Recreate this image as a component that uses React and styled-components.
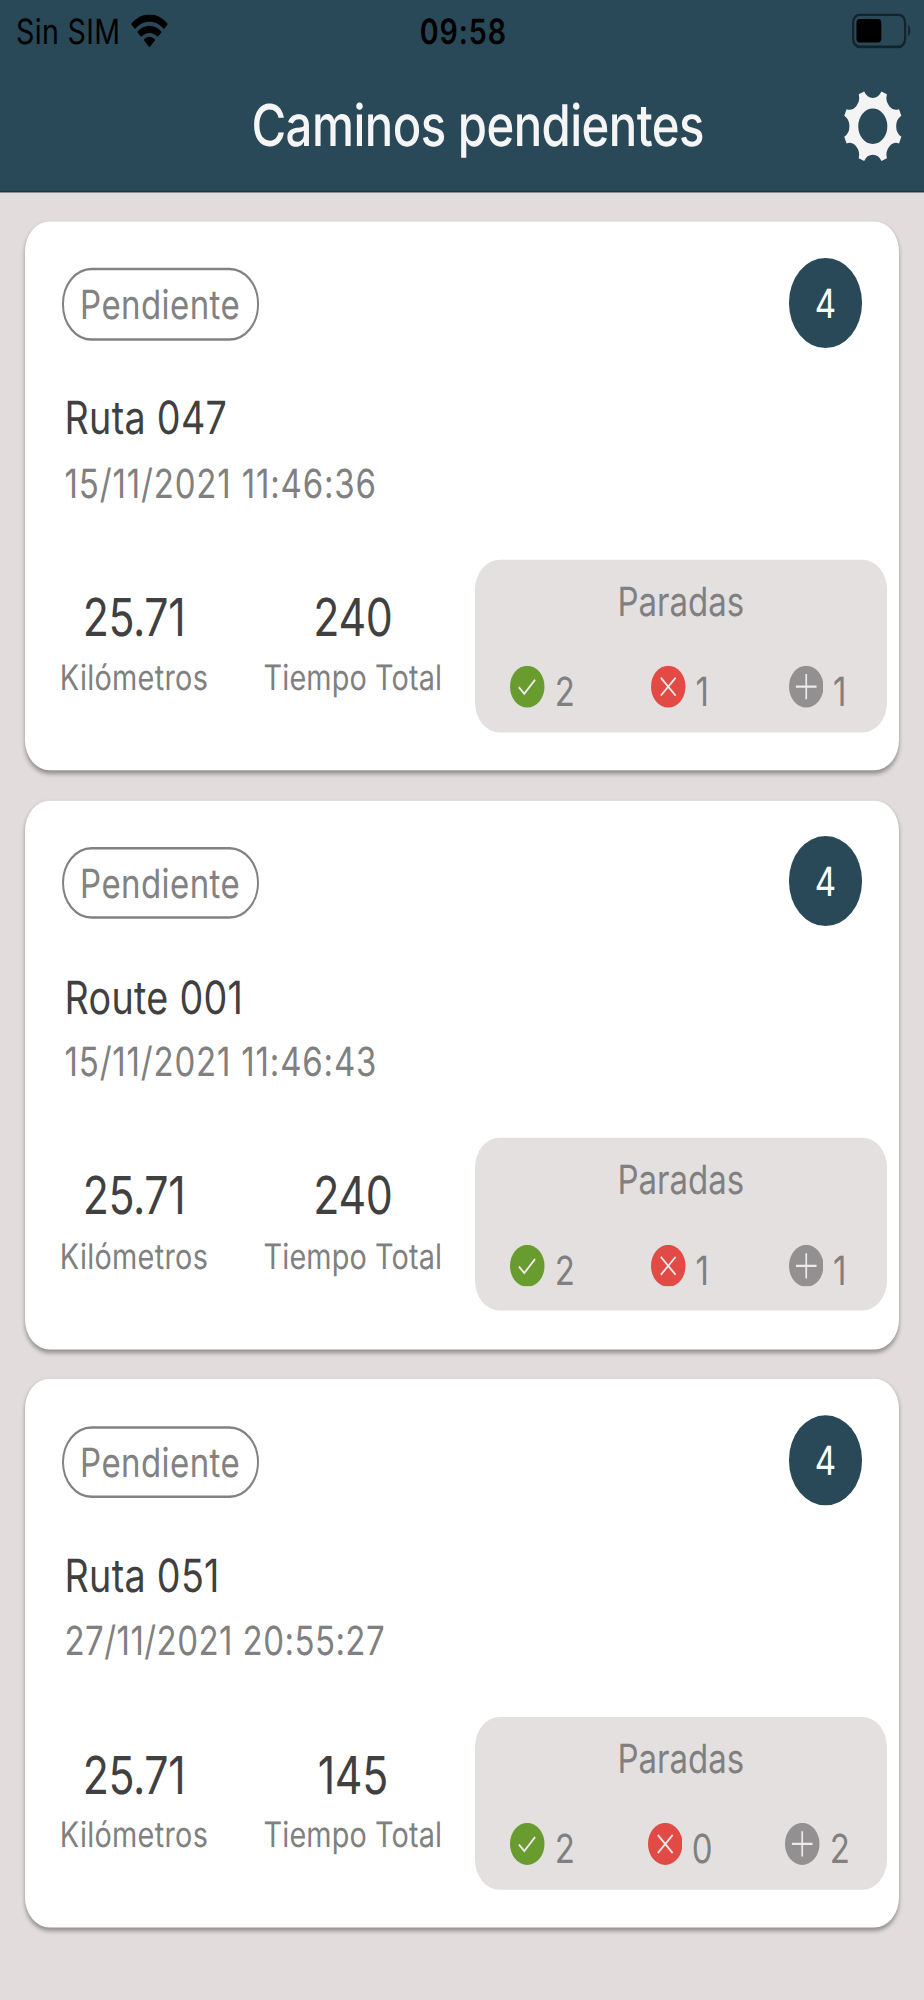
import React from "react";
import styled, { createGlobalStyle } from "styled-components";

const GlobalStyle = createGlobalStyle`
  body {
    margin: 0;
    background-color: #e2dcdc;
  }
`;

const routes = [
  { name: "Ruta 047", date: "15/11/2021 11:46:36", dateSpacing: "0.34px", km: "25.71", time: "240", total: 4, done: 2, failed: 1, added: 1 },
  { name: "Route 001", date: "15/11/2021 11:46:43", dateSpacing: "0.33px", km: "25.71", time: "240", total: 4, done: 2, failed: 1, added: 1 },
  { name: "Ruta 051", date: "27/11/2021 20:55:27", dateSpacing: "0.18px", km: "25.71", time: "145", total: 4, done: 2, failed: 0, added: 2 },
];

function WifiIcon() {
  return (
    <Wifi viewBox="0 0 15 11">
      <path d="M7.5 0C4.7 0 2.1 1.1 0.2 3L0.2 3.4L1.5 4.7H1.8C3.3 3.2 5.3 2.4 7.5 2.4S11.7 3.2 13.2 4.7H13.5L14.8 3.4V3C12.9 1.1 10.3 0 7.5 0Z" />
      <path d="M7.5 3.7C5.7 3.7 4 4.4 2.7 5.6V6L4 7.3H4.4C5.2 6.5 6.3 6.1 7.5 6.1S9.8 6.5 10.6 7.3H11L12.3 6V5.6C11 4.4 9.3 3.7 7.5 3.7Z" />
      <path d="M7.5 7.4C6.7 7.4 5.9 7.7 5.3 8.2V8.6L7.3 10.7H7.7L9.7 8.6V8.2C9.1 7.7 8.3 7.4 7.5 7.4Z" />
    </Wifi>
  );
}

// eight narrow teeth with a round notch between each pair
const gearPath = () => {
  const point = (deg) => {
    const a = (deg * Math.PI) / 180;
    return `${(12.1 * Math.cos(a)).toFixed(2)} ${(12.1 * Math.sin(a)).toFixed(2)}`;
  };
  let d = "";
  for (let i = 0; i < 8; i++) {
    const mid = 22.5 + i * 45;
    d += `${i ? "L" : "M"}${point(mid - 5.7)}L${point(mid + 5.7)}A3.97 3.97 0 0 0 ${point(mid + 39.3)}`;
  }
  return `${d}ZM5.9 0A5.9 5.9 0 1 0 -5.9 0A5.9 5.9 0 1 0 5.9 0Z`;
};

function GearIcon() {
  return (
    <Gear viewBox="-12.5 -12.5 25 25">
      <path d={gearPath()} fill="#f4f4f4" fillRule="evenodd" />
    </Gear>
  );
}

function RouteCard({ route }) {
  return (
    <Card>
      <CardTop>
        <Status>Pendiente</Status>
        <Total>{route.total}</Total>
      </CardTop>
      <Name>{route.name}</Name>
      <DateText $spacing={route.dateSpacing}>{route.date}</DateText>
      <CardBottom>
        <Metric>
          <Value>{route.km}</Value>
          <Label $spacing="0.12px">Kilómetros</Label>
        </Metric>
        <Metric>
          <Value>{route.time}</Value>
          <Label $spacing="0.05px">Tiempo Total</Label>
        </Metric>
        <Stops>
          <StopsTitle>Paradas</StopsTitle>
          <StopsRow>
            <Stop>
              <StopIcon viewBox="0 0 14 14">
                <circle cx="7" cy="7" r="7" fill="#689c2f" />
                <path d="M3.6 7.2L5.8 9.4L10.2 4.7" />
              </StopIcon>
              <Count>{route.done}</Count>
            </Stop>
            <Stop>
              <StopIcon viewBox="0 0 14 14">
                <circle cx="7" cy="7" r="7" fill="#e24b45" />
                <path d="M4 4L10 10M10 4L4 10" />
              </StopIcon>
              <Count>{route.failed}</Count>
            </Stop>
            <Stop>
              <StopIcon viewBox="0 0 14 14">
                <circle cx="7" cy="7" r="7" fill="#929091" />
                <path d="M7 2.8V11.2M2.8 7H11.2" />
              </StopIcon>
              <Count>{route.added}</Count>
            </Stop>
          </StopsRow>
        </Stops>
      </CardBottom>
    </Card>
  );
}

function App() {
  return (
    <Viewport>
      <GlobalStyle />
      <Screen>
        <Header>
          <StatusBar>
            <Carrier>
              Sin SIM
              <WifiIcon />
            </Carrier>
            <Clock>09:58</Clock>
            <Battery viewBox="0 0 24 12">
              <rect x="0.45" y="0.45" width="21.1" height="10.7" rx="2.6" fill="none" stroke="#000" strokeOpacity="0.5" strokeWidth="0.9" />
              <rect x="1.8" y="1.9" width="10.1" height="7.8" rx="1.3" />
              <path d="M22.8 3.9C23.9 4.4 23.9 7.2 22.8 7.7Z" fillOpacity="0.5" />
            </Battery>
          </StatusBar>
          <NavBar>
            <Title>Caminos pendientes</Title>
            <GearIcon />
          </NavBar>
        </Header>
        <List>
          {routes.map((route) => (
            <RouteCard key={route.name} route={route} />
          ))}
        </List>
      </Screen>
    </Viewport>
  );
}

const Viewport = styled.div`
  width: 924px;
  height: 2000px;
  overflow: hidden;
`;

/* 375x667 pt phone screen, stretched over the 924x2000 canvas */
const Screen = styled.div`
  width: 375px;
  height: 667px;
  zoom: 2.464;
  transform: scaleY(1.2169);
  transform-origin: 0 0;
  background-color: #e2dcdc;
  font-family: Inter, "Liberation Sans", sans-serif;
  text-rendering: geometricPrecision;
  white-space: nowrap;
`;

const Header = styled.div`
  height: 64px;
  box-sizing: border-box;
  background-color: #294858;
  border-bottom: 0.5px solid #1b3444;
`;

const StatusBar = styled.div`
  height: 20px;
  padding: 0 5.4px 0 6.5px;
  display: grid;
  grid-template-columns: 1fr auto 1fr;
  align-items: center;
  color: #000000;
  font-size: 11.6px;
  line-height: 20.8px;
`;

const Carrier = styled.div`
  display: flex;
  align-items: center;
  letter-spacing: 0.13px;
`;

const Wifi = styled.svg`
  width: 15px;
  height: 11px;
  margin-left: 4.5px;
`;

const Clock = styled.div`
  font-weight: 600;
  letter-spacing: 0.38px;
`;

const Battery = styled.svg`
  width: 24px;
  height: 12px;
  justify-self: end;
`;

const NavBar = styled.div`
  height: 44px;
  padding-left: 12.8px;
  box-sizing: border-box;
  display: grid;
  grid-template-columns: 1fr auto 1fr;
  align-items: center;
`;

const Title = styled.div`
  grid-column: 2;
  color: #f5f5f5;
  font-size: 19.2px;
  font-weight: 500;
  letter-spacing: -0.22px;
  line-height: 44.6px;
`;

const Gear = styled.svg`
  width: 25px;
  height: 25px;
  justify-self: end;
  margin-right: 8.4px;
`;

const List = styled.div`
  padding: 10px;
  display: flex;
  flex-direction: column;
  gap: 10px;
`;

const Card = styled.div`
  height: 183px;
  box-sizing: border-box;
  padding-top: 12px;
  background-color: #ffffff;
  border-radius: 10px;
  box-shadow: 0 1px 1.5px rgba(0, 0, 0, 0.35);
`;

const CardTop = styled.div`
  height: 30px;
  padding: 0 15px;
  display: flex;
  align-items: center;
  justify-content: space-between;
`;

const Status = styled.div`
  width: 80px;
  height: 24px;
  margin-top: 1px;
  box-sizing: border-box;
  border: 1px solid #828282;
  border-radius: 12px;
  color: #828282;
  font-size: 13.4px;
  letter-spacing: 0.17px;
  line-height: 23px;
  text-align: center;
`;

const Total = styled.div`
  width: 30px;
  height: 30px;
  border-radius: 50%;
  background-color: #294858;
  color: #ffffff;
  font-size: 13.4px;
  line-height: 30.5px;
  text-align: center;
`;

const Name = styled.div`
  margin-top: 13.9px;
  padding-left: 16.2px;
  color: #404040;
  font-size: 15.3px;
  letter-spacing: 0.12px;
  line-height: 20px;
`;

const DateText = styled.div`
  margin-top: 2.2px;
  padding-left: 16.2px;
  color: #808080;
  font-size: 13.4px;
  letter-spacing: ${(props) => props.$spacing};
  line-height: 18px;
`;

const CardBottom = styled.div`
  margin-top: 16.5px;
  padding-right: 5px;
  display: flex;
`;

const Metric = styled.div`
  width: 88.8px;
  padding-top: 8.6px;
  text-align: center;
`;

const Value = styled.div`
  color: #404040;
  font-size: 17.4px;
  letter-spacing: -0.16px;
  line-height: 22px;
`;

const Label = styled.div`
  color: #808080;
  font-size: 11.7px;
  letter-spacing: ${(props) => props.$spacing};
  line-height: 17.6px;
`;

const Stops = styled.div`
  width: 167.4px;
  height: 57.7px;
  margin-left: auto;
  background-color: #e4e0e0;
  border-radius: 10px;
`;

const StopsTitle = styled.div`
  color: #808080;
  font-size: 13.4px;
  line-height: 28px;
  text-align: center;
`;

const StopsRow = styled.div`
  margin-top: 5.5px;
  display: grid;
  grid-template-columns: repeat(3, 1fr);
`;

const Stop = styled.div`
  display: flex;
  justify-content: center;
  padding-right: 0.6px;
`;

const StopIcon = styled.svg`
  width: 14px;
  height: 14px;
  margin: 2.1px 4px 0 0;

  path {
    fill: none;
    stroke: #efe9e9;
    stroke-width: 0.7;
  }
`;

const Count = styled.div`
  color: #808080;
  font-size: 13.4px;
  line-height: 21.4px;
`;

export default App;
